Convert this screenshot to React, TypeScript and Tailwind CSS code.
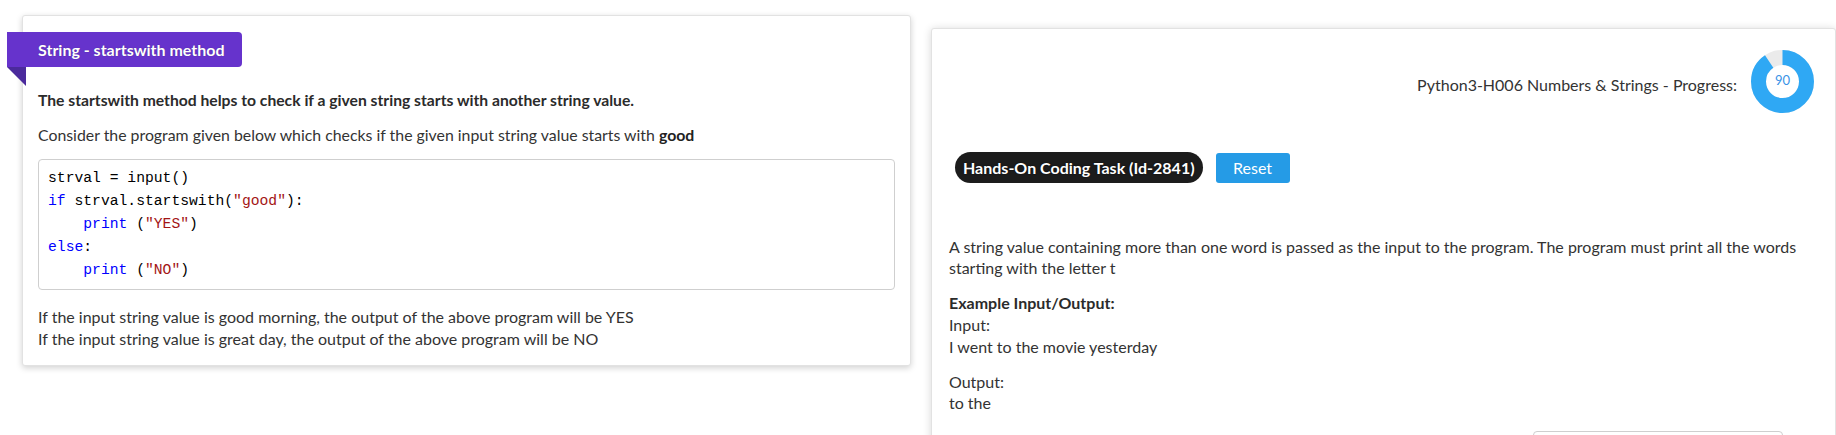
const codeLines = [
  [{ t: 'strval = input()', c: 'text-[#000]' }],
  [
    { t: 'if', c: 'text-[#0000ff]' },
    { t: ' strval.startswith(', c: 'text-[#000]' },
    { t: '"good"', c: 'text-[#a31515]' },
    { t: '):', c: 'text-[#000]' },
  ],
  [
    { t: '    ', c: '' },
    { t: 'print', c: 'text-[#0000ff]' },
    { t: ' (', c: 'text-[#000]' },
    { t: '"YES"', c: 'text-[#a31515]' },
    { t: ')', c: 'text-[#000]' },
  ],
  [
    { t: 'else', c: 'text-[#0000ff]' },
    { t: ':', c: 'text-[#000]' },
  ],
  [
    { t: '    ', c: '' },
    { t: 'print', c: 'text-[#0000ff]' },
    { t: ' (', c: 'text-[#000]' },
    { t: '"NO"', c: 'text-[#a31515]' },
    { t: ')', c: 'text-[#000]' },
  ],
];

function Donut({ value }: { value: number }) {
  const r = 24;
  const c = 2 * Math.PI * r;
  return (
    <div className="relative w-[63px] h-[63px] shrink-0">
      <svg width="63" height="63" viewBox="0 0 63 63">
        <circle cx="31.5" cy="31.5" r={r} fill="none" stroke="#ebebeb" strokeWidth="15" />
        <circle
          cx="31.5"
          cy="31.5"
          r={r}
          fill="none"
          stroke="#2fa8f4"
          strokeWidth="15"
          strokeDasharray={`${(value / 100) * c} ${c}`}
          transform="rotate(-90 31.5 31.5)"
        />
      </svg>
      <span className="absolute inset-0 flex items-center justify-center text-[13px] text-[#3a93e6] leading-none pb-[2px]">
        {value}
      </span>
    </div>
  );
}

export default function App() {
  return (
    <div className="w-[1836px] h-[435px] overflow-hidden bg-white flex items-start font-['Lato','Noto_Sans',sans-serif] text-[#333]">
      {/* left: concept card */}
      <div className="ml-[22px] mt-[15px] w-[889px] shrink-0 bg-white border border-[#e2e2e2] rounded-[3px] shadow-[0_2px_6px_rgba(0,0,0,0.18)] pl-[15px] pr-[15px] pb-[15px]">
        <div className="relative -ml-[31px] mt-[16px] inline-flex">
          <div className="h-[35px] bg-[#6633cc] rounded-r-[4px] pl-[31px] pr-[17px] flex items-center text-white font-bold text-[16px] [text-shadow:0_0_1px_rgba(0,0,0,0.35)]">
            String - startswith method
          </div>
          <div className="absolute left-0 top-[35px] w-0 h-0 border-t-[19px] border-t-[#4b2a9c] border-l-[19px] border-l-transparent" />
        </div>
        <p className="mt-[23px] text-[15.7px] leading-[21px] font-bold text-[#2b2b2b]">
          The startswith method helps to check if a given string starts with another string value.
        </p>
        <p className="mt-[13px] text-[15.85px] leading-[21px]">
          Consider the program given below which checks if the given input string value starts with{' '}
          <b className="text-[#222]">good</b>
        </p>
        <div className="mt-[14px] border border-[#cfcfcf] rounded-[4px] py-[7px] pl-[9px] font-['Liberation_Mono',monospace] text-[14.7px] leading-[23px] whitespace-pre">
          {codeLines.map((line, i) => (
            <div key={i}>
              {line.map((s, j) => (
                <span key={j} className={s.c}>
                  {s.t}
                </span>
              ))}
            </div>
          ))}
        </div>
        <div className="mt-[16px] text-[16px] leading-[22px]">
          <div>If the input string value is good morning, the output of the above program will be YES</div>
          <div>If the input string value is great day, the output of the above program will be NO</div>
        </div>
      </div>

      {/* right: task card */}
      <div className="ml-[20px] mt-[28px] w-[905px] h-[420px] shrink-0 bg-white border border-[#e2e2e2] rounded-[3px] shadow-[0_1px_8px_rgba(0,0,0,0.16)] pl-[17px] pr-[18px]">
        <div className="mt-[21px] flex items-center justify-end gap-[14px] pr-[3px]">
          <span className="text-[16px] pt-[7px]">Python3-H006 Numbers &amp; Strings - Progress:</span>
          <Donut value={90} />
        </div>
        <div className="mt-[39px] ml-[6px] flex items-center gap-[13px]">
          <span className="h-[31px] px-[8px] rounded-full bg-[#1c1c1c] text-white font-bold text-[16px] flex items-center [text-shadow:0_0_2px_rgba(0,0,0,0.6)]">
            Hands-On Coding Task (Id-2841)
          </span>
          <button className="h-[30px] w-[74px] rounded-[3px] bg-[#259be6] text-white text-[16px] flex items-center justify-center">
            Reset
          </button>
        </div>
        <p className="mt-[53px] text-[16px] leading-[21px]">
          A string value containing more than one word is passed as the input to the program. The program must print all the words
          starting with the letter t
        </p>
        <div className="mt-[14px] text-[16px] leading-[22px]">
          <div className="font-bold text-[#2b2b2b]">Example Input/Output:</div>
          <div>Input:</div>
          <div>I went to the movie yesterday</div>
        </div>
        <div className="mt-[13px] text-[16px] leading-[21px]">
          <div>Output:</div>
          <div>to the</div>
        </div>
        <div className="mt-[18px] flex justify-end pr-[34px]">
          <div className="w-[250px] h-[30px] border border-[#cfcfcf] rounded-[4px]" />
        </div>
      </div>
    </div>
  );
}
